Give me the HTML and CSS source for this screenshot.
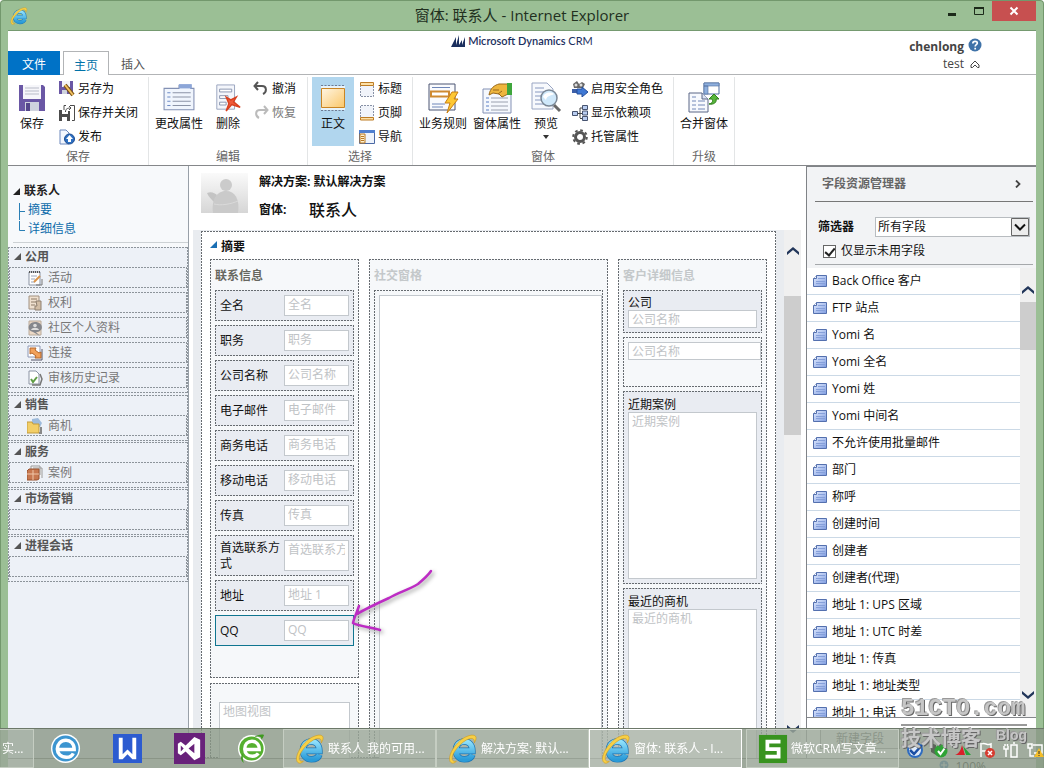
FILE: index.html
```html
<!DOCTYPE html>
<html lang="zh-CN">
<head>
<meta charset="utf-8">
<title>窗体: 联系人 - Internet Explorer</title>
<link rel="stylesheet" href="styles.css">
</head>
<body>
<svg class="defs" aria-hidden="true">
  <defs>
    <linearGradient id="gBlue" x1="0" y1="0" x2="1" y2="1"><stop offset="0" stop-color="#e4edff"/><stop offset="1" stop-color="#7f9ce0"/></linearGradient>
    <linearGradient id="gIe" x1="0" y1="0" x2="0" y2="1"><stop offset="0" stop-color="#8fe0fb"/><stop offset="1" stop-color="#2a9bd8"/></linearGradient>
    <linearGradient id="gOrange" x1="0" y1="0" x2="1" y2="1"><stop offset="0" stop-color="#fff6e4"/><stop offset="1" stop-color="#fbc768"/></linearGradient>
    <linearGradient id="gGrey" x1="0" y1="0" x2="0" y2="1"><stop offset="0" stop-color="#fafafa"/><stop offset="1" stop-color="#d6d6d6"/></linearGradient>
    <symbol id="ie" viewBox="0 0 32 32">
      <path d="M9 18H26C26 11.500 22 8 17.500 8 12 8 8.500 12 8.500 17.500 8.500 23 12 27 17.500 27 22 27 25 25 26 22" fill="none" stroke="#1d75b4" stroke-width="7"/>
      <path d="M9 18H26C26 11.500 22 8 17.500 8 12 8 8.500 12 8.500 17.500 8.500 23 12 27 17.500 27 22 27 25 25 26 22" fill="none" stroke="url(#gIe)" stroke-width="5.500"/>
      <path d="M4 31C-2 28 4 14 14 6 22 .5 29.500 -.5 30 4 30 6 29 8 28 9.500 28.500 6 27 4 23 5 15 7 3 21 4.500 27 5 29 7 29.500 9 29 7 31 5.500 31.500 4 31Z" fill="#f7cf45" stroke="#c9951c" stroke-width=".6"/>
    </symbol>
    <symbol id="disk" viewBox="0 0 28 28">
      <path d="M1 1H25L27 3V27H1Z" fill="#6a57a5"/><path d="M5 1H23V15H5Z" fill="#f6f6fa"/><path d="M7 4H21M7 7H21M7 10H21" stroke="#b9bcc8"/><path d="M7 18H21V27H7Z" fill="#cfd3de"/><path d="M8 19H12V27H8Z" fill="#55468c"/>
    </symbol>
    <symbol id="form" viewBox="0 0 30 28">
      <path d="M1 5H15V2H26V5H29V25H1Z" fill="#f0f5fd" stroke="#8391b4"/><path d="M15 1H27V5H15Z" fill="#8ca6d8"/><path d="M4 9H7M4 13H7M4 17H7M4 21H7" stroke="#6d8ac5"/><path d="M9 9H26M9 13H26M9 17H26M9 21H26" stroke="#8b93a6"/>
    </symbol>
    <symbol id="delete" viewBox="0 0 28 30">
      <path d="M2 1H21V27H2Z" fill="#f4f6fb" stroke="#97a1bc"/><path d="M5 5.500H18V8.500H5ZM5 12.500H14V15.500H5ZM5 19.500H12V22.500H5Z" fill="#fff" stroke="#8792ad"/>
      <path d="M12 14 17 17 23 14 20 19 27 25 18 22 12 29 15 21Z" fill="#ef5a3a" stroke="#d8401f" stroke-width="1.500"/>
    </symbol>
    <symbol id="body" viewBox="0 0 28 28"><path d="M2 1.500H26M2 26.500H26" fill="none" stroke="#6f7b92" stroke-dasharray="2 1.500"/><path d="M2 2H26V26H2Z" fill="#fff" opacity=".7"/><path d="M2.500 4.500H25.500V23.500H2.500Z" fill="url(#gOrange)" stroke="#c98524"/></symbol>
    <symbol id="rules" viewBox="0 0 32 32"><path d="M2 2H28V28H2Z" fill="#fafbfd" stroke="#4a5573"/><path d="M5 5.500H23M5 22H18M5 25H16" stroke="#6e86b8"/><path d="M4 9.500H22V14.500H4Z" fill="#fff" stroke="#cf8a31" stroke-width="2"/><path d="M25 10H31L27 17H31L20 31 23 21H18Z" fill="#fdc733" stroke="#c77d12"/></symbol>
    <symbol id="props" viewBox="0 0 32 32"><path d="M2 7H30V31H2Z" fill="#f5f8fd" stroke="#8391b4"/><path d="M5 16H8M5 20H8M5 24H8M5 28H8" stroke="#5b7fc5"/><path d="M10 16H27M10 20H27M10 24H27M10 28H27" stroke="#9aa0ae"/><path d="M8 13C9 6 14 3 18 2H27V12L21 15 18 12 12 11Z" fill="#eeb63e" stroke="#99691b"/><path d="M12 8H18M17 12 21 9" stroke="#99691b"/><path d="M26 1H31V13H26Z" fill="#3fa63c"/></symbol>
    <symbol id="preview" viewBox="0 0 32 32"><path d="M2 1H17L23 7V27H2Z" fill="#f7f9fd" stroke="#9aa6c3"/><path d="M5 6H14M5 10H14M5 14H12M5 18H12M5 22H16" stroke="#8798bf"/><path d="M24 23 30 29" stroke="#686868" stroke-width="3"/><circle cx="19" cy="16" r="8" fill="#cfe8fa" stroke="#7a8795" stroke-width="1.500"/><path d="M13 15C14 11 20 9 24 12 21 14 17 13 16 18Z" fill="#fff"/></symbol>
    <symbol id="merge" viewBox="0 0 32 32"><path d="M16 1H31V12H16Z" fill="#fff" stroke="#4d6b9c"/><path d="M16 1H31V4H16ZM16 4H20V12H16Z" fill="#8fb0de" stroke="#4d6b9c" stroke-width=".6"/><path d="M1 11H14L20 17V30H1Z" fill="#f7f9fd" stroke="#5a6786"/><path d="M14 11V17H20" fill="#dbe4f5" stroke="#5a6786"/><path d="M4 15H8M4 19H8M4 23H8M4 27H8M10 19H17M10 23H17M10 27H17" stroke="#7388b8"/><path d="M21 22C25 21 25 19 24 17H21L26 12 31 17H28C29 20 26 23 21 22Z" fill="#57b53b" stroke="#2f7f1b"/></symbol>
    <symbol id="saveas" viewBox="0 0 16 16"><path d="M0 0H14V13H0Z" fill="#6a57a5"/><path d="M3 0H11V6H3Z" fill="#f3f3f8"/><path d="M3 9H8V13H3Z" fill="#cfd3de"/><path d="M6 4 14 14" stroke="#7a5313" stroke-width="4"/><path d="M6 4 14 14" stroke="#f3c060" stroke-width="2"/></symbol>
    <symbol id="saveclose" viewBox="0 0 16 16"><path d="M0 5H3V9H9V6H11V16H0Z" fill="#4c4c4c"/><path d="M3 12H8V16H3Z" fill="#fff"/><path d="M5 5V.5H7M11 .5H15.500V15.500H13M6.500 7C6.500 4 8 3 12 3M10 1 12 3 10 5" fill="none" stroke="#4c4c4c"/></symbol>
    <symbol id="publish" viewBox="0 0 16 16"><path d="M1 1H7L10 4V15H1Z" fill="#f3f7fe" stroke="#6c88bd"/><circle cx="10.500" cy="10" r="5" fill="#2d6fc2" stroke="#1d4c90"/><path d="M10.500 6 14 10H12V13H9V10H7Z" fill="#fff"/></symbol>
    <symbol id="undo" viewBox="0 0 16 16"><path d="M5 1 1.500 5 5 9M2 5H9C14 5 14 11 10 13" fill="none" stroke="currentColor" stroke-width="2"/></symbol>
    <symbol id="head" viewBox="0 0 16 16"><path d="M1.500 4V15.500H14.500V4" fill="#f1f4fa" stroke="#8891a6" stroke-dasharray="2 1"/><path d="M1.500 1.500H14.500V4.500H1.500Z" fill="#fde0a6" stroke="#bd7c24"/></symbol>
    <symbol id="foot" viewBox="0 0 16 16"><path d="M1.500 12V.5H14.500V12" fill="#f1f4fa" stroke="#8891a6" stroke-dasharray="2 1"/><path d="M1.500 12.500H14.500V15H1.500Z" fill="#fde0a6" stroke="#bd7c24"/></symbol>
    <symbol id="navi" viewBox="0 0 16 16"><path d="M.5 1.500H15.500V14.500H.5Z" fill="#eef3fb" stroke="#4b69a5"/><path d="M0 1H16V4H0Z" fill="#4f7fd0"/><path d="M1 5H6V14H1Z" fill="#fff1d0" stroke="#b97923"/><path d="M2 7.500H5M2 9.500H5M2 11.500H5" stroke="#b97923"/></symbol>
    <symbol id="roles" viewBox="0 0 16 16"><path d="M1 3 5 0 7 3 10 1 13 3 11 7H2Z" fill="#666"/><circle cx="4" cy="4" r="1.500" fill="#ddd"/><circle cx="9" cy="4" r="1.500" fill="#ddd"/><path d="M0 8H5V12H0Z" fill="#3d5fa8"/><path d="M5 8H10V6L16 11 10 16V13H5Z" fill="#3f78d4" stroke="#244e9b"/></symbol>
    <symbol id="deps" viewBox="0 0 16 16"><path d="M.5 6.500H5.500V10.500H.5ZM10.500 .5H15.500V4.500H10.500ZM10.500 6H15.500V10H10.500ZM10.500 11.500H15.500V15.500H10.500Z" fill="#b9cdf0" stroke="#46536f"/><path d="M6 8.500H10M8 13V3H10M8 13.500H10" fill="none" stroke="#444"/></symbol>
    <symbol id="gear" viewBox="0 0 16 16"><circle cx="8" cy="8" r="4.500" fill="none" stroke="#555" stroke-width="3"/><circle cx="8" cy="8" r="6.800" fill="none" stroke="#555" stroke-width="2" stroke-dasharray="2.700 2.640"/></symbol>
    <symbol id="note" viewBox="0 0 16 16"><path d="M2 2H13V15H2Z" fill="#fff" stroke="#8a93a3"/><path d="M2 2H13" stroke="#555" stroke-width="2" stroke-dasharray="1 1"/><path d="M4 6H10M4 9H8M4 12H8" stroke="#9aa5ba"/><path d="M7 12 13 6" stroke="#db9449" stroke-width="2"/><path d="M15 9V15H9" fill="none" stroke="#777"/></symbol>
    <symbol id="ledger" viewBox="0 0 16 16"><path d="M2 1H12V14H2Z" fill="#efe0cf" stroke="#a09080"/><path d="M4 4H10M4 7H10M4 10H8" stroke="#8d7a67"/><path d="M9 6H14V15H8V11H10Z" fill="#d2bda5" stroke="#8f8070"/></symbol>
    <symbol id="social" viewBox="0 0 16 16"><path d="M2 1H14V15H2Z" fill="#ecd9c6" stroke="#b9aa9a"/><path d="M8 2C17 2 17 12 9 12L13 16 6 12C-1 11 1 2 8 2Z" fill="#85878c"/><circle cx="8" cy="5.500" r="1.800" fill="#ddd"/><path d="M4 10C5 7 11 7 12 10Z" fill="#ddd"/></symbol>
    <symbol id="link" viewBox="0 0 16 16"><path d="M1 1H13V12H1Z" fill="#fff" stroke="#8d98b5"/><path d="M15 4V15H4" fill="none" stroke="#556"/><path d="M3 3H9L8 5 12 8 14 7V13H8L9 11 5 8 3 9Z" fill="#f2a15a" stroke="#b4662a"/></symbol>
    <symbol id="audit" viewBox="0 0 16 16"><path d="M2 1H9L12 4V14H2Z" fill="#fff" stroke="#8a93a3"/><path d="M4 9 6 12 10 7" fill="none" stroke="#5f9d44" stroke-width="2"/><path d="M13 4 15 9 13 15H5" fill="none" stroke="#777" stroke-width="1.500"/></symbol>
    <symbol id="folder" viewBox="0 0 16 16"><path d="M5 1 11 0 15 5 13 9H5Z" fill="#9dbbdc"/><path d="M0 4H5L6 6H12V15H0Z" fill="#f2ce67" stroke="#c29b3d"/><path d="M14 9V15H12" fill="none" stroke="#888" stroke-width="2"/></symbol>
    <symbol id="case" viewBox="0 0 16 16"><path d="M4 4V1H13V10M6 3H15V13" fill="#f5f5f5" stroke="#999"/><path d="M0 6 2 4H12V14L10 15H0Z" fill="#c77850" stroke="#99522f"/><path d="M6 5V15M0 9H12" stroke="#f0c6a8"/></symbol>
    <symbol id="field" viewBox="0 0 14 14"><path d="M3.500 1.500H13.500V12.500H.5V4.500Z" fill="url(#gBlue)" stroke="#5470ae"/><path d="M.5 4.500H3.500V1.500" fill="#fff" stroke="#5470ae"/><path d="M5 4.500H12M3 7.500H12M3 9.500H12" stroke="#86a0da"/></symbol>
    <symbol id="up" viewBox="0 0 12 8"><path d="M0 7V5L6 0 12 5V8L6 3 0 8Z" fill="#22365a"/></symbol>
    <symbol id="tri" viewBox="0 0 8 8"><path d="M8 0V8H0Z" fill="currentColor"/></symbol>
  </defs>
</svg>

<div class="window">
  <header class="titlebar">
    <svg class="app-icon"><use href="#ie"/></svg>
    <h1 class="window-title">窗体: 联系人 - Internet Explorer</h1>
    <div class="controls">
      <button class="ctl" aria-label="最小化"><svg width="10" height="10"><path d="M1 8.500H9" stroke="#1c2a1a" stroke-width="3"/></svg></button>
      <button class="ctl" aria-label="最大化"><svg width="10" height="10"><path d="M.5 1.500H9.500V8.500H.5Z" fill="none" stroke="#1c2a1a"/><path d="M0 2H10" stroke="#1c2a1a" stroke-width="2"/></svg></button>
      <button class="ctl ctl-close" aria-label="关闭"><svg width="10" height="10"><path d="M1.500 1.500 8.500 8.500M8.500 1.500 1.500 8.500" stroke="#fff" stroke-width="2"/></svg></button>
    </div>
  </header>

  <div class="page">
    <div class="top">
      <nav class="tabs">
        <button class="tab tab-file">文件</button>
        <button class="tab tab-on">主页</button>
        <button class="tab">插入</button>
      </nav>
      <div class="brand">
        <svg width="15" height="13" viewBox="0 0 15 13"><path d="M0 12 5 2V10L8 0V10L11 5V10L14 2V12Z" fill="#1b2f5e"/></svg>
        <span>Microsoft Dynamics <span class="brand-thin">CRM</span></span>
      </div>
      <div class="user">
        <strong>chenlong</strong>
        <svg width="14" height="14"><circle cx="7" cy="7" r="6.500" fill="#3f72a8"/><path d="M4.800 5.500C4.800 2.500 9.500 2.700 9.300 5.200 9.200 6.700 7.200 6.600 7.200 8.500M7.200 9.800V11.500" fill="none" stroke="#fff" stroke-width="1.700"/></svg>
        <span>test</span>
        <svg width="14" height="10"><path d="M3 6 7 2 11 6V8.500H9.500L7 6 4.500 8.500H3Z" fill="none" stroke="#444"/></svg>
      </div>
    </div>

    <div class="ribbon">
      <section class="group g-save">
        <div class="tools">
          <button class="big"><svg class="ic28"><use href="#disk"/></svg>保存</button>
          <div class="smalls">
            <button class="small"><svg class="ic16"><use href="#saveas"/></svg>另存为</button>
            <button class="small"><svg class="ic16"><use href="#saveclose"/></svg>保存并关闭</button>
            <button class="small"><svg class="ic16"><use href="#publish"/></svg>发布</button>
          </div>
        </div>
        <h2 class="group-name">保存</h2>
      </section>
      <section class="group g-edit">
        <div class="tools">
          <button class="big big-wide"><svg class="ic32"><use href="#form"/></svg>更改属性</button>
          <button class="big"><svg class="ic28"><use href="#delete"/></svg>删除</button>
          <div class="smalls">
            <button class="small"><svg class="ic16"><use href="#undo"/></svg>撤消</button>
            <button class="small is-off"><svg class="ic16 flip"><use href="#undo"/></svg>恢复</button>
          </div>
        </div>
        <h2 class="group-name">编辑</h2>
      </section>
      <section class="group g-select">
        <div class="tools">
          <button class="big is-on"><svg class="ic28"><use href="#body"/></svg>正文</button>
          <div class="smalls">
            <button class="small"><svg class="ic16"><use href="#head"/></svg>标题</button>
            <button class="small"><svg class="ic16"><use href="#foot"/></svg>页脚</button>
            <button class="small"><svg class="ic16"><use href="#navi"/></svg>导航</button>
          </div>
        </div>
        <h2 class="group-name">选择</h2>
      </section>
      <section class="group g-form">
        <div class="tools">
          <button class="big big-wide"><svg class="ic32"><use href="#rules"/></svg>业务规则</button>
          <button class="big big-wide"><svg class="ic32"><use href="#props"/></svg>窗体属性</button>
          <button class="big"><svg class="ic32"><use href="#preview"/></svg>预览<svg class="caret" width="6" height="4"><path d="M0 0H6L3 4Z" fill="#333"/></svg></button>
          <div class="smalls">
            <button class="small"><svg class="ic16"><use href="#roles"/></svg>启用安全角色</button>
            <button class="small"><svg class="ic16"><use href="#deps"/></svg>显示依赖项</button>
            <button class="small"><svg class="ic16"><use href="#gear"/></svg>托管属性</button>
          </div>
        </div>
        <h2 class="group-name">窗体</h2>
      </section>
      <section class="group g-up">
        <div class="tools">
          <button class="big big-wide"><svg class="ic32"><use href="#merge"/></svg>合并窗体</button>
        </div>
        <h2 class="group-name">升级</h2>
      </section>
    </div>

    <div class="main">
      <nav class="side">
        <div class="side-top">
          <h2 class="side-title"><svg class="tri"><use href="#tri"/></svg>联系人</h2>
          <ul class="tree">
            <li><svg class="twig" viewBox="0 0 6 19"><path d="M.5 2V19M0 10.500H6" fill="none" stroke="#2a7fb5"/></svg><a href="#summary">摘要</a></li>
            <li><svg class="twig" viewBox="0 0 6 19"><path d="M.5 1V10.500H6" fill="none" stroke="#2a7fb5"/></svg><a href="#details">详细信息</a></li>
          </ul>
        </div>
        <div class="side-groups">
          <section class="sg dash">
            <h3><svg class="tri"><use href="#tri"/></svg>公用</h3>
            <ul>
              <li class="dash"><svg class="ic16"><use href="#note"/></svg>活动</li>
              <li class="dash"><svg class="ic16"><use href="#ledger"/></svg>权利</li>
              <li class="dash"><svg class="ic16"><use href="#social"/></svg>社区个人资料</li>
              <li class="dash"><svg class="ic16"><use href="#link"/></svg>连接</li>
              <li class="dash"><svg class="ic16"><use href="#audit"/></svg>审核历史记录</li>
            </ul>
          </section>
          <section class="sg dash">
            <h3><svg class="tri"><use href="#tri"/></svg>销售</h3>
            <ul><li class="dash"><svg class="ic16"><use href="#folder"/></svg>商机</li></ul>
          </section>
          <section class="sg dash">
            <h3><svg class="tri"><use href="#tri"/></svg>服务</h3>
            <ul><li class="dash"><svg class="ic16"><use href="#case"/></svg>案例</li></ul>
          </section>
          <section class="sg dash">
            <h3><svg class="tri"><use href="#tri"/></svg>市场营销</h3>
            <ul><li class="dash"></li></ul>
          </section>
          <section class="sg dash">
            <h3><svg class="tri"><use href="#tri"/></svg>进程会话</h3>
            <ul><li class="dash"></li></ul>
          </section>
        </div>
      </nav>

      <main class="center">
        <div class="form-head">
          <svg class="avatar" viewBox="0 0 47 40"><path d="M0 0H47V40H0Z" fill="url(#gGrey)"/><path d="M6 20C10 18 14 20 16 22L13 29C10 26 7 23 6 20Z" fill="#c4c4c4"/><circle cx="25" cy="12" r="6" fill="#cbcbcb"/><path d="M12 40C10 25 17 18 25 18 34 18 39 26 37 40Z" fill="#cacaca"/><path d="M13 31C20 33 30 31 37 28" fill="none" stroke="#dadada"/></svg>
          <dl class="facts">
            <dt>解决方案: 默认解决方案</dt><dd></dd>
            <dt>窗体:</dt><dd>联系人</dd>
          </dl>
        </div>
        <div class="scroller">
          <section class="sheet dash" id="summary">
            <h2 class="sheet-title"><svg class="tri"><use href="#tri"/></svg>摘要</h2>
            <div class="cols">
              <div class="col">
                <div class="box box-contact dash">
                  <h3 class="box-title title-on">联系信息</h3>
                  <div class="cell dash"><label for="f1">全名</label><input id="f1" placeholder="全名"></div>
                  <div class="cell dash"><label for="f2">职务</label><input id="f2" placeholder="职务"></div>
                  <div class="cell dash"><label for="f3">公司名称</label><input id="f3" placeholder="公司名称"></div>
                  <div class="cell dash"><label for="f4">电子邮件</label><input id="f4" placeholder="电子邮件"></div>
                  <div class="cell dash"><label for="f5">商务电话</label><input id="f5" placeholder="商务电话"></div>
                  <div class="cell dash"><label for="f6">移动电话</label><input id="f6" placeholder="移动电话"></div>
                  <div class="cell dash"><label for="f7">传真</label><input id="f7" placeholder="传真"></div>
                  <div class="cell cell-tall dash"><label for="f8">首选联系方式</label><input id="f8" placeholder="首选联系方式"></div>
                  <div class="cell dash"><label for="f9">地址</label><input id="f9" placeholder="地址 1"></div>
                  <div class="cell cell-picked"><label for="f10">QQ</label><input id="f10" placeholder="QQ">
                    <svg class="pen" viewBox="0 0 90 70"><path d="M81 6C79 9 74 14 68 19C58 25 50 27 39 33C28 38 17 43 7 49M9 41C7 47 4 53 3 58M3 58C10 62 22 62 30 65" fill="none" stroke="#bd2cc4" stroke-width="2.500" stroke-linecap="round"/></svg>
                  </div>
                </div>
                <div class="box box-map dash"><textarea aria-label="地图视图" placeholder="地图视图"></textarea></div>
              </div>
              <div class="col">
                <div class="box box-fill dash">
                  <h3 class="box-title">社交窗格</h3>
                  <div class="pane dash"><div class="pane-body"></div></div>
                </div>
              </div>
              <div class="col">
                <div class="box box-fill dash">
                  <h3 class="box-title">客户详细信息</h3>
                  <div class="stack dash"><label for="c1">公司</label><input id="c1" placeholder="公司名称"></div>
                  <div class="stack stack-plain dash"><input aria-label="公司名称" placeholder="公司名称"></div>
                  <div class="stack stack-list dash"><label for="c3">近期案例</label><textarea id="c3" placeholder="近期案例"></textarea></div>
                  <div class="stack stack-list dash"><label for="c4">最近的商机</label><textarea id="c4" placeholder="最近的商机"></textarea></div>
                </div>
              </div>
            </div>
          </section>
          <div class="bar bar-main"><svg class="arrow"><use href="#up"/></svg><div class="thumb"></div><svg class="arrow down"><use href="#up"/></svg></div>
        </div>
      </main>

      <aside class="fields">
        <div class="fields-head">
          <h2>字段资源管理器</h2>
          <svg width="6" height="8"><path d="M1 .5 4.500 4 1 7.500" fill="none" stroke="#444" stroke-width="1.800"/></svg>
        </div>
        <div class="filter">
          <label class="filter-name" for="filter">筛选器</label>
          <div class="pick">
            <select id="filter"><option>所有字段</option></select>
            <svg class="pick-arrow" viewBox="0 0 18 18"><path d="M0 0H18V18H0Z" fill="#ececec"/><path d="M.5 .5H17.500V17.500H.5Z" fill="none" stroke="#666"/><path d="M4 6.500 9 11.500 14 6.500" fill="none" stroke="#111" stroke-width="2"/></svg>
          </div>
        </div>
        <label class="only"><input type="checkbox" checked>仅显示未用字段</label>
        <div class="list-wrap">
          <ul class="list">
            <li><svg><use href="#field"/></svg>Back Office 客户</li>
            <li><svg><use href="#field"/></svg>FTP 站点</li>
            <li><svg><use href="#field"/></svg>Yomi 名</li>
            <li><svg><use href="#field"/></svg>Yomi 全名</li>
            <li><svg><use href="#field"/></svg>Yomi 姓</li>
            <li><svg><use href="#field"/></svg>Yomi 中间名</li>
            <li><svg><use href="#field"/></svg>不允许使用批量邮件</li>
            <li><svg><use href="#field"/></svg>部门</li>
            <li><svg><use href="#field"/></svg>称呼</li>
            <li><svg><use href="#field"/></svg>创建时间</li>
            <li><svg><use href="#field"/></svg>创建者</li>
            <li><svg><use href="#field"/></svg>创建者(代理)</li>
            <li><svg><use href="#field"/></svg>地址 1: UPS 区域</li>
            <li><svg><use href="#field"/></svg>地址 1: UTC 时差</li>
            <li><svg><use href="#field"/></svg>地址 1: 传真</li>
            <li><svg><use href="#field"/></svg>地址 1: 地址类型</li>
            <li><svg><use href="#field"/></svg>地址 1: 电话</li>
          </ul>
          <div class="bar bar-list"><svg class="arrow"><use href="#up"/></svg><div class="thumb"></div><svg class="arrow down"><use href="#up"/></svg></div>
        </div>
        <div class="fields-foot"><button class="new-field">新建字段</button></div>
      </aside>
    </div>
    <footer class="status"><svg width="10" height="10"><circle cx="5" cy="5" r="4.500" fill="#4a86c8"/><path d="M2 5H8M5 2V8" stroke="#fff"/></svg><span>100%</span></footer>
  </div>
</div>

<footer class="taskbar">
  <button class="task task-cut">实...</button>
  <div class="pins">
    <button class="pin" aria-label="Internet Explorer"><svg viewBox="0 0 32 32"><circle cx="16" cy="16" r="15" fill="#fff"/><circle cx="16" cy="16" r="13.500" fill="#3c95d0"/><path d="M9 17H25C25 11 21 7.500 16.500 7.500 11 7.500 7.500 11.500 7.500 16.500 7.500 21 11 25 17 25 20 25 23 23.500 24 21" fill="none" stroke="#fff" stroke-width="3.500"/></svg></button>
    <button class="pin" aria-label="文字"><svg viewBox="0 0 32 32"><path d="M1 1H31V31H1Z" fill="#2c5bd0"/><path d="M7 5H11V22L16 17 21 22V5H25V27H21L16 22 11 27H7Z" fill="#fff"/></svg></button>
    <button class="pin" aria-label="Visual Studio"><svg viewBox="0 0 32 32"><path d="M0 0H32V32H0Z" fill="#68217a"/><path d="M21 4 27 7V25L21 28 12 19 7 23 4 21V11L7 9 12 13ZM21 11 15 16 21 21ZM7 13V19L10 16Z" fill="#fff" fill-rule="evenodd"/></svg></button>
    <button class="pin" aria-label="浏览器"><svg viewBox="0 0 32 32"><circle cx="16" cy="16" r="14" fill="#fff"/><circle cx="16" cy="16" r="12.500" fill="#55b02f"/><path d="M10 17H24C24 11 20 8.500 16.500 8.500 12 8.500 9 12 9 16.500 9 21 12 24 17 24 20 24 22 22.500 23 21" fill="none" stroke="#fff" stroke-width="3.500"/><path d="M8 31C4 28 5 24 7 21 7 25 7 28 8 31ZM18 5C22 2 26 1 29 2 28 4 28 5 26 7 27 3 23 3 18 5Z" fill="#3f9a20"/></svg></button>
  </div>
  <div class="tasks">
    <button class="task"><svg><use href="#ie"/></svg><span>联系人 我的可用...</span></button>
    <button class="task"><svg><use href="#ie"/></svg><span>解决方案: 默认...</span></button>
    <button class="task task-on"><svg><use href="#ie"/></svg><span>窗体: 联系人 - I...</span></button>
    <button class="task"><svg viewBox="0 0 32 32"><path d="M1 1H31V31H1Z" fill="#38931f"/><path d="M24 8H10V16H22V24H8" fill="none" stroke="#fff" stroke-width="4"/></svg><span>微软CRM写文章...</span></button>
  </div>
  <div class="tray">
    <svg viewBox="0 0 18 18"><circle cx="9" cy="9" r="8" fill="#2f6cc0"/><circle cx="9" cy="9" r="6" fill="#dfeaf8"/><path d="M4 9 8 13 16 4" fill="none" stroke="#1b4fa5" stroke-width="2.500"/></svg>
    <svg viewBox="0 0 18 18"><path d="M1 2 6 4V14L1 11Z" fill="#5c665b"/><circle cx="11" cy="10" r="6.500" fill="#2fa336"/><path d="M8 10 10.500 13 14.500 7.500" fill="none" stroke="#fff" stroke-width="2"/></svg>
    <svg viewBox="0 0 18 18"><path d="M1 14C6 12 7 8 8 4L11 14Z" fill="#d8202a"/><path d="M9 5 17 14H12Z" fill="#28a13a"/></svg>
    <svg viewBox="0 0 18 18"><path d="M3 2V16M4 3C7 1 9 5 13 3V10H4" fill="none" stroke="#fff" stroke-width="1.500"/><circle cx="12" cy="12" r="5" fill="#d63b30"/><path d="M10 10 14 14M14 10 10 14" stroke="#fff" stroke-width="1.500"/></svg>
    <svg viewBox="0 0 18 18"><path d="M9 4H15V16H9ZM11 2H13M2 5V8H6V5M4 8V16M3 3V5M5.500 3V5" fill="none" stroke="#fff" stroke-width="1.500"/></svg>
    <svg viewBox="0 0 18 18"><path d="M2 3H6V7H2ZM4 7V15H8M7 4H16V12H8" fill="none" stroke="#fff" stroke-width="1.500"/><path d="M13 7 18 16H8Z" fill="#f5bd27"/><path d="M13 10V13M13 14V15" stroke="#333"/></svg>
  </div>
</footer>
<div class="watermark"><span class="wm-site">51CTO.com</span><span class="wm-cn">技术博客</span><span class="wm-blog">Blog</span></div>
</body>
</html>
```

FILE: styles.css
```css
* { box-sizing: border-box; }
body {
  margin: 0;
  height: 100vh;
  overflow: hidden;
  font: 12px/16px "Open Sans", "Noto Sans CJK SC", sans-serif;
  color: #111;
}
h1, h2, h3, ul, dl, dd { margin: 0; padding: 0; font-size: 12px; }
ul { list-style: none; }
button, input, textarea, select { font: inherit; color: inherit; border-radius: 0; }
button { background: none; border: 0; padding: 0; white-space: nowrap; }
svg { display: block; flex: none; }
.defs { position: absolute; width: 0; height: 0; }
.ic16 { width: 16px; height: 16px; }
.ic28 { width: 28px; height: 28px; margin: 2px 0; }
.ic32 { width: 32px; height: 32px; }
.tri { width: 7px; height: 7px; }

/* Short-dash outline, two pixels on and one off */
.dash {
  --ink: #666b70;
  --fill: transparent;
  background:
    repeating-linear-gradient(90deg, var(--ink) 0 2px, transparent 2px 3px) top / 100% 1px no-repeat,
    repeating-linear-gradient(90deg, var(--ink) 0 2px, transparent 2px 3px) bottom / 100% 1px no-repeat,
    repeating-linear-gradient(var(--ink) 0 2px, transparent 2px 3px) left / 1px 100% no-repeat,
    repeating-linear-gradient(var(--ink) 0 2px, transparent 2px 3px) right / 1px 100% no-repeat,
    var(--fill);
}

.window {
  display: flex;
  flex-direction: column;
  height: 100vh;
  padding: 0 7px;
  background: #9bbf95;
  border-top: 1px solid #73986d;
  border-left: 1px solid #73986d;
  border-right: 1px solid #73986d;
  border-radius: 4px 4px 0 0;
}
.titlebar { display: grid; grid-template-columns: 1fr auto 1fr; height: 29px; align-items: center; flex: none; }
.app-icon { width: 18px; height: 18px; margin-left: 2px; }
.window-title { font-size: 15px; line-height: 20px; font-weight: 400; color: #22301f; padding-bottom: 2px; }
.controls { display: flex; justify-content: flex-end; align-self: start; }
.ctl { width: 27px; height: 20px; display: flex; align-items: center; justify-content: center; }
.ctl-close { width: 44px; background: #c75050; }

.page { flex: 1; display: flex; flex-direction: column; min-height: 0; background: #fff; border-top: 1px solid #759a70; }
.top { display: grid; grid-template-columns: 1fr auto 1fr; height: 44px; border-bottom: 1px solid #b2b4b6; flex: none; }
.tabs { display: flex; align-self: end; margin-bottom: -1px; }
.tab { height: 24px; padding: 4px 12px 0; color: #555; font-size: 12px; }
.tab-file { width: 52px; background: #0072c6; color: #fff; margin-right: 3px; }
.tab-on { width: 46px; padding: 4px 0 0; background: #fff; border: 1px solid #b2b4b6; border-bottom: 0; color: #0072a8; }
.brand { display: flex; gap: 2px; height: 20px; align-items: center; font-family: Lato, sans-serif; font-size: 11px; font-weight: 600; color: #1b2f5e; }
.brand-thin { font-weight: 400; }
.user {
  justify-self: end; align-self: start;
  display: grid; grid-template-columns: auto 14px; gap: 0 4px;
  justify-items: end; align-items: center;
  margin: 4px 54px 0 0; color: #444; line-height: 18px;
}
.user strong { font-size: 12px; padding-top: 4px; line-height: 16px; }

.ribbon { display: flex; height: 91px; border-bottom: 1px solid #85878a; flex: none; padding-top: 2px; }
.group { border-right: 1px solid #e3e5e6; padding: 0 4px; display: flex; flex-direction: column; }
.g-save { flex: 0 0 141px; }
.g-save .tools { gap: 5px; }
.g-edit { flex: 0 0 159px; }
.g-select { flex: 0 0 105px; }
.g-select .tools { gap: 5px; }
.g-form { flex: 0 0 261px; }
.g-up { flex: 0 0 61px; }
.tools { display: flex; height: 70px; flex: none; }
.group-name { font-weight: 400; color: #666; text-align: center; line-height: 20px; }
.big { width: 42px; height: 69px; display: flex; flex-direction: column; align-items: center; padding-top: 5px; line-height: 20px; }
.big-wide { width: 52px; }
.g-save .big { padding-right: 2px; }
.g-form .tools { gap: 2px; }
.g-form .smalls { margin-left: 3px; }
.is-on { background: #b1d6ee; }
.caret { margin-top: 1px; }
.smalls { display: flex; flex-direction: column; }
.small { display: flex; align-items: center; gap: 3px; height: 24px; flex: none; }
.g-edit .tools { gap: 2px; }
.g-edit .smalls { margin-left: 2px; }
.g-edit .small .ic16 { color: #555; }
.small.is-off { color: #777; }
.g-edit .is-off .ic16 { color: #bbb; }
.flip { transform: scaleX(-1); }

.main { flex: 1; min-height: 0; display: grid; grid-template-columns: 181px 1fr 230px; grid-template-rows: 100%; }
.status { display: flex; justify-content: flex-end; gap: 6px; height: 10px; padding: 1px 50px 0 0; flex: none; border-top: 1px solid #8a8a8a; background: #f0f0f0; color: #333; line-height: 14px; }

.side { background: #edf1f7; border-right: 1px solid #98a0a8; overflow: hidden; }
.side-top { background: #f7f9fb; padding: 15px 0 4px 5px; }
.side-title { display: flex; align-items: center; gap: 4px; line-height: 20px; color: #222; }
.tree { border-bottom: 1px solid #ccd1d4; padding: 0 0 3px 6px; }
.tree li { display: flex; gap: 3px; height: 19px; line-height: 18px; font-weight: 400; }
.twig { width: 6px; height: 19px; }
.tree a { color: #0d6cab; text-decoration: none; }
.side-groups { display: flex; flex-direction: column; gap: 1px; }
.sg { --ink: #8d949b; padding: 1px 1px 5px; }
.sg:first-child { margin-bottom: 1px; }
.sg h3 { display: flex; align-items: center; gap: 4px; height: 19px; padding: 0 0 2px 5px; color: #555; }
.sg ul { display: flex; flex-direction: column; gap: 4px; }
.sg li { --ink: #8d949b; display: flex; align-items: center; gap: 5px; height: 21px; padding: 0 0 0 18px; color: #777; font-weight: 400; }

.center { min-width: 0; display: flex; flex-direction: column; padding: 0 5px 0 4px; }
.form-head { display: flex; gap: 11px; height: 64px; padding: 7px 0 0 8px; flex: none; }
.avatar { width: 47px; height: 40px; }
.facts { display: grid; grid-template-columns: 50px 1fr; grid-auto-rows: 28px; margin-top: -5px; align-items: center; line-height: 20px; }
.facts dt { font-weight: 700; white-space: nowrap; }
.facts dd { font-size: 16px; font-weight: 500; }
.scroller { flex: 1; min-height: 0; display: grid; grid-template-columns: 1fr 17px; grid-template-rows: 100%; background: #e9ecf0; }
.sheet { --fill: #fff; margin: 1px 8px 0 8px; padding: 1px 9px 0; display: flex; flex-direction: column; min-width: 0; }
.sheet-title { display: flex; align-items: center; gap: 4px; height: 27px; padding-top: 2px; color: #111; }
.sheet-title .tri { color: #1a6fb4; margin-bottom: 4px; }
.cols { flex: 1; min-height: 0; display: grid; grid-template-columns: 149fr 239fr 149fr; grid-template-rows: 100%; gap: 10px; }
.col { min-width: 0; display: flex; flex-direction: column; gap: 5px; overflow: visible; }
.box { --fill: #f6f8fa; padding: 0 5px; display: flex; flex-direction: column; gap: 4px; }
.box-fill { flex: 1; min-height: 0; overflow: hidden; }
.box-title { height: 27px; line-height: 34px; color: #c4c8ca; }
.title-on { color: #66675f; }
.box-contact { flex: none; padding-bottom: 32px; }
.box-map { flex: 1; padding: 19px 9px 0; min-height: 0; }
.box-map textarea { flex: 1; min-height: 0; border-bottom: 0; }
.cell { --fill: #e9ecf2; position: relative; display: flex; justify-content: space-between; align-items: center; min-height: 31px; padding: 5px; }
.cell label { flex: 1; }
.cell input { width: 65px; height: 21px; padding: 0 3px 3px; }
.cell-tall { height: 41px; }
.cell-tall input { height: 31px; padding-bottom: 13px; }
.cell-picked { background: #e9ecf2; border: 1px solid #0f7590; padding: 4px; z-index: 1; }
.pen { position: absolute; left: 134px; top: -51px; width: 90px; height: 70px; filter: drop-shadow(2px 2px 2px #999); pointer-events: none; }
input, textarea { background: #fff; border: 1px solid #c3c8cd; padding: 0 3px; min-width: 0; resize: none; overflow: hidden; }
input::placeholder, textarea::placeholder { color: #bfc3c6; opacity: 1; }
textarea { padding-top: 1px; }
.pane { flex: 1; padding: 5px 1px 0 5px; min-height: 0; display: flex; }
.pane-body { flex: 1; background: #fff; border: 1px solid #c3c8cd; border-bottom: 0; }
.stack { --fill: #e9ecf2; padding: 4px 5px 5px; display: flex; flex-direction: column; flex: none; }
.stack input { height: 18px; }
.stack label { height: 16px; line-height: 18px; }
.stack-plain { --fill: #f6f8fa; padding: 5px 1px 27px 5px; }
.stack-list { height: 193px; }
.stack-list label { height: 17px; line-height: 20px; }
.stack-list textarea { flex: 1; }

.bar { display: flex; flex-direction: column; align-items: center; background: #f0f0f0; }
.arrow { width: 12px; height: 8px; }
.down { transform: scaleY(-1); margin-top: auto; }
.thumb { width: 100%; background: #cdcdcd; }
.bar-main { padding: 17px 0 25px; }
.bar-main .thumb { height: 139px; margin-top: 41px; }
.bar-list { padding: 18px 0; }
.bar-list .thumb { height: 48px; margin-top: 8px; }

.fields { display: flex; flex-direction: column; min-width: 0; background: #f2f3f5; border-left: 1px solid #808387; border-top: 1px solid #808387; }
.fields-head { display: flex; justify-content: space-between; align-items: center; height: 35px; margin: 0 3px 0 8px; padding: 0 12px 0 7px; border-bottom: 1px solid #777; flex: none; }
.fields-head h2 { color: #666; }
.filter { display: flex; align-items: center; margin: 15px 6px 0 11px; flex: none; }
.filter-name { width: 57px; font-weight: 700; }
.pick { flex: 1; position: relative; }
.pick select { width: 100%; height: 20px; padding: 0 2px; appearance: none; background: #fff; border: 1px solid #b8bcc0; line-height: 18px; }
.pick-arrow { position: absolute; right: 1px; top: 1px; width: 18px; height: 18px; pointer-events: none; }
.only { display: flex; align-items: center; gap: 5px; height: 27px; margin: 1px 3px 0 8px; padding: 0 0 0 8px; border-bottom: 1px solid #a5a8ab; flex: none; }
.only input { appearance: none; width: 13px; height: 13px; margin: 0; padding: 0; border: 1px solid #666; display: grid; place-items: center; }
.only input:checked::before { content: ""; width: 4px; height: 8px; border: solid #222; border-width: 0 2px 2px 0; transform: rotate(40deg); margin-bottom: 2px; }
.list-wrap { flex: 1; min-height: 0; margin-top: 3px; display: grid; grid-template-columns: 1fr 16px; grid-template-rows: 100%; border-bottom: 1px solid #85888c; background: #fff; }
.list { overflow: hidden; }
.list li { display: flex; align-items: center; gap: 5px; height: 27px; padding: 0 0 0 6px; border-bottom: 1px solid #cbd9e6; }
.list svg { width: 14px; height: 14px; }
.fields-foot { height: 40px; background: #fff; flex: none; padding: 11px 0 0 13px; }
.new-field { width: 80px; height: 20px; border: 1px solid #888; background: #f1f1f1; color: #444; }

/* Translucent system bar, floating above the window */
.taskbar {
  position: fixed; left: 0; right: 0; bottom: 0; z-index: 5;
  display: flex; height: 40px;
  background: rgba(138, 151, 134, .8);
  border-top: 1px solid #6c7869;
  color: #fff;
}
.task { display: flex; align-items: center; gap: 3px; height: 39px; width: 153px; padding: 0 4px 0 11px; overflow: hidden; background: rgba(255, 255, 255, .12); border: 1px solid #c5cdc2; }
.task svg { width: 30px; height: 30px; }
.task-cut { width: 34px; padding: 0 0 0 2px; border-left: 0; }
.task-on { background: rgba(255, 255, 255, .25); border-color: #fff; }
.pins { display: flex; justify-content: space-around; align-items: center; width: 249px; }
.pin svg { width: 31px; height: 31px; }
.tasks { display: flex; }
.tasks .task:last-child { margin-left: 4px; }
.tray { display: flex; flex: 1; justify-content: space-between; align-items: center; padding: 2px 0 0 7px; overflow: hidden; }
.tray svg { width: 18px; height: 18px; }
.watermark {
  position: fixed; right: 17px; bottom: 16px; z-index: 6; width: 126px;
  display: flex; flex-wrap: wrap; justify-content: space-between;
  font-family: "Liberation Sans", "Noto Sans CJK SC", sans-serif; font-weight: 700;
  color: #c6c6c6; text-shadow: 1px 1px 0 #666, -1px -1px 0 #999;
  pointer-events: none;
}
.wm-site { width: 100%; font-family: "Liberation Mono", monospace; font-size: 23px; line-height: 30px; border-bottom: 2px solid #999; }
.wm-cn { font-size: 20px; line-height: 26px; }
.wm-blog { font-size: 14px; line-height: 18px; }
```
